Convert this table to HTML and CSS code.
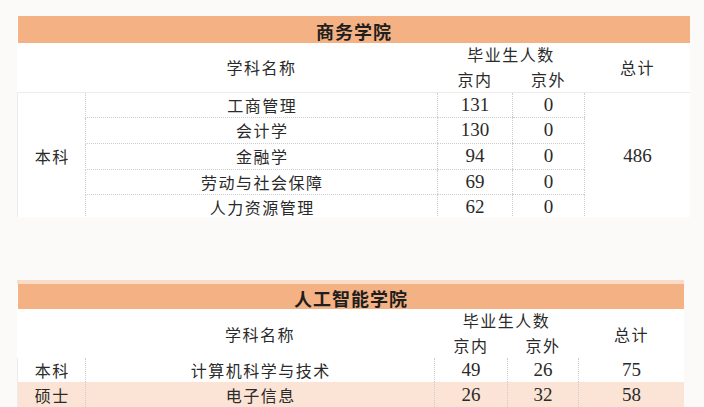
FILE: index.html
```html
<!DOCTYPE html>
<html lang="zh">
<head>
<meta charset="utf-8">
<link rel="stylesheet" href="styles.css">
</head>
<body>
<div class="page">
  <div class="clip clip-one">
    <table class="sheet sheet-one">
      <colgroup>
        <col class="c1"><col class="c2"><col class="c3"><col class="c4"><col class="c5">
      </colgroup>
      <tr class="title"><td colspan="5">商务学院</td></tr>
      <tr class="head-a">
        <td rowspan="2" class="cj"></td>
        <td rowspan="2" class="cj">学科名称</td>
        <td colspan="2" class="cj group">毕业生人数</td>
        <td rowspan="2" class="cj">总计</td>
      </tr>
      <tr class="head-b">
        <td class="cj">京内</td>
        <td class="cj">京外</td>
      </tr>
      <tr class="r r1">
        <td rowspan="5" class="cj span vl">本科</td>
        <td class="cj vl hl">工商管理</td>
        <td class="num vl hl">131</td>
        <td class="num vl hl">0</td>
        <td rowspan="5" class="num span vl vr">486</td>
      </tr>
      <tr class="r r2">
        <td class="cj vl hl">会计学</td>
        <td class="num vl hl">130</td>
        <td class="num vl hl">0</td>
      </tr>
      <tr class="r r3">
        <td class="cj vl hl">金融学</td>
        <td class="num vl hl">94</td>
        <td class="num vl hl">0</td>
      </tr>
      <tr class="r r4">
        <td class="cj vl hl">劳动与社会保障</td>
        <td class="num vl hl">69</td>
        <td class="num vl hl">0</td>
      </tr>
      <tr class="r r5">
        <td class="cj vl">人力资源管理</td>
        <td class="num vl">62</td>
        <td class="num vl">0</td>
      </tr>
    </table>
  </div>

  <div class="clip clip-two">
    <div class="strip"></div>
    <table class="sheet sheet-two">
      <colgroup>
        <col class="d1"><col class="d2"><col class="d3"><col class="d4"><col class="d5">
      </colgroup>
      <tr class="title title-two"><td colspan="5">人工智能学院</td></tr>
      <tr class="head-a">
        <td rowspan="2" class="cj"></td>
        <td rowspan="2" class="cj">学科名称</td>
        <td colspan="2" class="cj group">毕业生人数</td>
        <td rowspan="2" class="cj">总计</td>
      </tr>
      <tr class="head-b">
        <td class="cj">京内</td>
        <td class="cj">京外</td>
      </tr>
      <tr class="r q1">
        <td class="cj vl">本科</td>
        <td class="cj vl">计算机科学与技术</td>
        <td class="num vl">49</td>
        <td class="num vl">26</td>
        <td class="num vl vr">75</td>
      </tr>
      <tr class="r q2 peach">
        <td class="cj vl">硕士</td>
        <td class="cj vl">电子信息</td>
        <td class="num vl">26</td>
        <td class="num vl">32</td>
        <td class="num vl vr">58</td>
      </tr>
    </table>
  </div>
</div>
</body>
</html>
```

FILE: styles.css
```css
html, body {
  margin: 0;
  padding: 0;
  background: #fcfaf8;
}

.page {
  padding: 16px 0 0 17px;
  color: #2a2a2a;
}

.clip {
  overflow: hidden;
  background: #ffffff;
}

.clip-one {
  width: 673px;
  height: 201px;
}

.clip-two {
  width: 667px;
  height: 127px;
  margin-top: 63px;
}

.strip {
  height: 4px;
  background: #f8dcc8;
}

.sheet {
  border-collapse: collapse;
  table-layout: fixed;
  border-spacing: 0;
}

.sheet-one { width: 673px; }
.sheet-two { width: 667px; }

.c1 { width: 68px; }
.c2 { width: 352px; }
.c3 { width: 75px; }
.c4 { width: 72px; }
.c5 { width: 106px; }

.d1 { width: 68px; }
.d2 { width: 349px; }
.d3 { width: 73px; }
.d4 { width: 71px; }
.d5 { width: 106px; }

td {
  box-sizing: border-box;
  padding: 0;
  text-align: center;
  vertical-align: middle;
  white-space: nowrap;
}

.cj {
  font-family: "Noto Sans CJK SC", "Noto Sans CJK JP", sans-serif;
  font-size: 16px;
  letter-spacing: 1.5px;
  line-height: 16px;
  padding-left: 1.5px;
}

.num {
  font-family: "Liberation Serif", "Times New Roman", serif;
  font-size: 19px;
  line-height: 16px;
}

.title td {
  height: 27px;
  background: #f4b183;
  font-family: "Noto Sans CJK SC", "Noto Sans CJK JP", sans-serif;
  font-weight: bold;
  font-size: 18px;
  letter-spacing: 1px;
  line-height: 18px;
  color: #1e1e1e;
  padding-top: 2px;
}

.title-two td {
  height: 25px;
}

.head-a { height: 23px; }
.head-b { height: 26px; }
.head-a td, .head-b td { padding: 0; }

.head-a td.group {
  padding-bottom: 2px;
}

.sheet-one .head-b td,
.sheet-one .head-a td[rowspan="2"] {
  border-bottom: 1px solid #ededed;
}

.r1 { height: 25px; }
.r2 { height: 26px; }
.r3 { height: 26px; }
.r4 { height: 25px; }
.r5 { height: 26px; }

.q1 { height: 24px; }
.q2 { height: 25px; }

.r td { height: auto; }

.vl { border-left: 1px dotted #cdcdcd; }
.vr { border-right: 1px dotted #d8d8d8; }
.hl { border-bottom: 1px dotted #cdcdcd; }

.sheet-one .r1 td:first-child,
.sheet-two .r td:first-child {
  border-left: 1px solid #ececec;
}

.peach td {
  background: #fbe4d5;
}
```
